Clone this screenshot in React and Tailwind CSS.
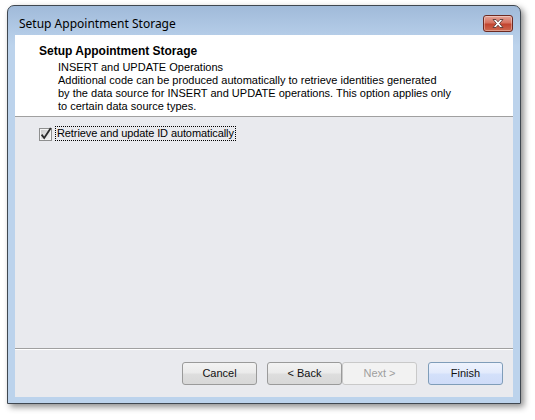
import React from 'react';

const font = { fontFamily: '"Liberation Sans", Arial, sans-serif' };

const CloseButton = () => (
  <div className="mt-[9px] w-[30px] h-[17px] rounded-[3px] border border-[#6d2a22] bg-[linear-gradient(to_bottom,#e4a499,#d6725f_45%,#c2442f_55%,#cf6a50)] flex items-center justify-center shadow-[inset_0_0_0_1px_rgba(255,255,255,0.35)]">
    <svg width="14" height="11" viewBox="0 0 14 11">
      <path
        d="M2 1.5 L5 1.5 L7 3.8 L9 1.5 L12 1.5 L8.6 5.5 L12 9.5 L9 9.5 L7 7.2 L5 9.5 L2 9.5 L5.4 5.5 Z"
        fill="#ffffff"
        stroke="#5a3a36"
        strokeWidth="0.9"
        strokeLinejoin="round"
      />
    </svg>
  </div>
);

const CheckBox = () => (
  <svg width="14" height="14" viewBox="0 0 14 14" className="shrink-0">
    <defs>
      <linearGradient id="cbfill" x1="0" y1="0" x2="1" y2="1">
        <stop offset="0" stopColor="#cbcbcb" />
        <stop offset="1" stopColor="#f4f4f4" />
      </linearGradient>
    </defs>
    <rect x="0.5" y="1.5" width="12" height="12" fill="#f4f4f4" stroke="#8e8f8f" />
    <rect x="2" y="3" width="9" height="9" fill="url(#cbfill)" />
    <path d="M2.6 7.6 L5.2 11 L11.8 1" fill="none" stroke="#2b2b2b" strokeWidth="1.8" />
  </svg>
);

const Button = ({ children, variant }) => {
  const styles = {
    normal: 'border-[#9a9a9a] bg-[linear-gradient(to_bottom,#f3f3f3,#ebebeb_45%,#dddddd_55%,#d8d8d8)] text-[#111]',
    disabled: 'border-[#c9c9c9] bg-[#f2f2f2] text-[#9e9e9e]',
    primary: 'border-[#7f9db9] bg-[linear-gradient(to_bottom,#eef3fd,#e3ebfc_45%,#d3e0fa_55%,#cfdcf8)] text-[#111]',
  };
  return (
    <div
      className={`w-[75px] h-[23px] rounded-[3px] border flex items-center justify-center text-[11px] ${styles[variant]}`}
    >
      {children}
    </div>
  );
};

export default function App() {
  return (
    <div className="w-[535px] h-[420px] bg-white pt-[5px] pl-[7px]" style={font}>
      <div className="w-[514px] h-[399px] flex flex-col rounded-t-[7px] border border-[#3f4750] bg-[linear-gradient(to_bottom,#a0bad9,#b4cce7_28px,#bcd3ec_40px,#bcd3ec)] shadow-[3px_3px_6px_rgba(0,0,0,0.45)] px-[7px] pb-[6px]">
        <div className="h-[29px] flex items-start justify-between">
          <span
            className="pl-[4px] pt-[10px] text-[12px] text-black leading-[16px]"
            style={{ fontFamily: '"Noto Sans", "Open Sans", sans-serif' }}
          >
            Setup Appointment Storage
          </span>
          <CloseButton />
        </div>

        <div className="h-[362px] flex flex-col">
          <div className="h-[82px] bg-white border-b border-[#a0a0a0] pt-[10px] pl-[24px] text-[11px] leading-[13px] text-black">
            <div className="font-bold text-[12px]">Setup Appointment Storage</div>
            <div className="pl-[19px] pt-[3px]">
              <div>INSERT and UPDATE Operations</div>
              <div>Additional code can be produced automatically to retrieve identities generated</div>
              <div>by the data source for INSERT and UPDATE operations. This option applies only</div>
              <div>to certain data source types.</div>
            </div>
          </div>

          <div className="flex-1 bg-[#e9eaee] pt-[9px] pl-[24px]">
            <div className="flex items-center h-[15px]">
              <CheckBox />
              <span className="ml-[2px] h-[15px] px-[1px] border border-dotted border-black flex items-center text-[11px] tracking-[-0.1px] text-black">
                Retrieve and update ID automatically
              </span>
            </div>
          </div>

          <div className="h-[49px] bg-[#e9eaee] border-t border-[#a0a0a0]">
            <div className="h-full border-t border-white flex justify-end items-start pt-[12px] pr-[10px]">
              <Button variant="normal">Cancel</Button>
              <div className="ml-[10px] flex">
                <Button variant="normal">&lt; Back</Button>
                <Button variant="disabled">Next &gt;</Button>
              </div>
              <div className="ml-[11px]">
                <Button variant="primary">Finish</Button>
              </div>
            </div>
          </div>
        </div>
      </div>
    </div>
  );
}
